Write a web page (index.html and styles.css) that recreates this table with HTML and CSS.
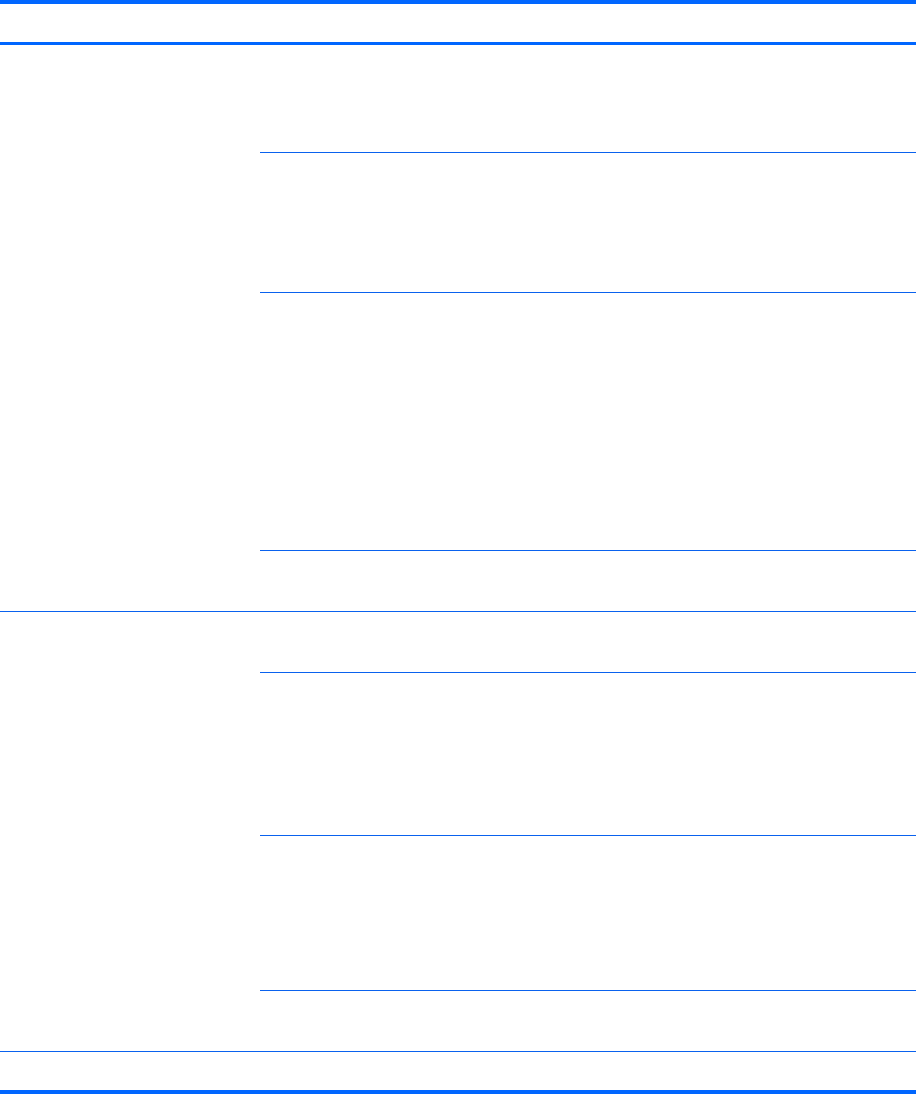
FILE: index.html
```html
<!DOCTYPE html>
<html lang="en">
<head>
    <meta charset="UTF-8">
    <title>Table</title>
    <link rel="stylesheet" href="styles.css">
</head>
<body>

<div class="spec-table">
    <div class="head"></div>

    <div class="group">
        <div class="label"></div>
        <div class="rows">
            <div class="row h107"></div>
            <div class="row h139"></div>
            <div class="row h257"></div>
            <div class="row h60"></div>
        </div>
    </div>

    <div class="group">
        <div class="label"></div>
        <div class="rows">
            <div class="row h60"></div>
            <div class="row h162"></div>
            <div class="row h154"></div>
            <div class="row h60"></div>
        </div>
    </div>

    <div class="foot"></div>
</div>

</body>
</html>
```

FILE: styles.css
```css
body {
    margin: 0;
    background: #fff;
    font-family: 'Liberation Sans', Arial, sans-serif;
}
.spec-table {
    width: 916px;
    border-top: 4px solid #0066ff;
    border-bottom: 4px solid #0066ff;
}
.head {
    height: 38px;
    border-bottom: 3px solid #0066ff;
}
.group {
    display: flex;
    border-bottom: 1px solid #0a62ee;
}
.label {
    width: 260px;
}
.rows {
    flex: 1;
}
.row {
    border-bottom: 1px solid #0a62ee;
}
.row:last-child {
    border-bottom: none;
}
.h60 { height: 60px; }
.h107 { height: 107px; }
.h139 { height: 139px; }
.h154 { height: 154px; }
.h162 { height: 162px; }
.h257 { height: 257px; }
.foot {
    height: 38px;
}
```
